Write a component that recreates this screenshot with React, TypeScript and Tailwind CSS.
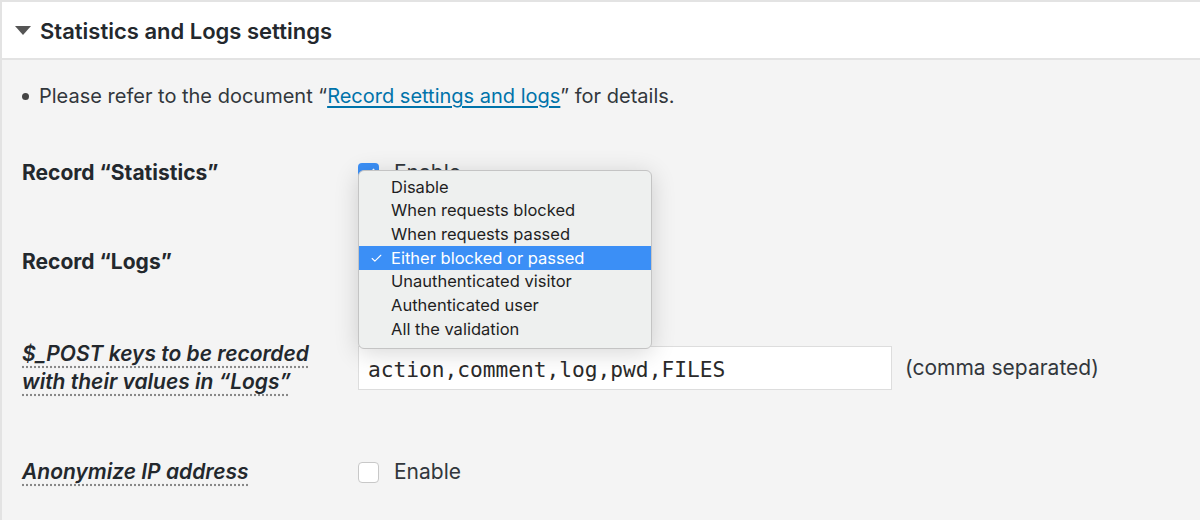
import { Check } from "lucide-react";

const options = [
  "Disable",
  "When requests blocked",
  "When requests passed",
  "Either blocked or passed",
  "Unauthenticated visitor",
  "Authenticated user",
  "All the validation",
];

const App = () => {
  return (
    <div className="w-[1200px] h-[520px] overflow-hidden bg-[#f4f4f4] border-t-2 border-l-2 border-[#e3e3e3] font-['Inter',sans-serif] text-[#23282d]">
      {/* Header */}
      <div className="h-[58px] bg-white border-b-2 border-[#e3e3e3] flex items-center pl-[13px] gap-[9px]">
        <svg width="16" height="9" viewBox="0 0 16 9" className="mt-[1px]">
          <polygon points="0,0 16,0 8,9" fill="#555" />
        </svg>
        <h2 className="text-[22px] font-semibold mt-[2px]">Statistics and Logs settings</h2>
      </div>

      {/* Body */}
      <div className="pl-[20px]">
        <ul className="mt-[22px] h-[28px] flex items-center text-[20px] text-[#32373c]">
          <li className="flex items-center gap-[10px]">
            <span className="w-[7px] h-[7px] rounded-full bg-[#444]" />
            <span>
              Please refer to the document “
              <a href="#" className="text-[#0073aa] underline underline-offset-[3px]">
                Record settings and logs
              </a>
              ” for details.
            </span>
          </li>
        </ul>

        {/* Record Statistics */}
        <div className="mt-[38px] h-[50px] flex items-center">
          <div className="w-[336px] text-[21px] font-bold">Record “Statistics”</div>
          <div className="relative flex items-center gap-[15px]">
            <span className="w-[21px] h-[21px] rounded-[4px] bg-[#3b8ff6] flex items-center justify-center">
              <Check className="w-[14px] h-[14px] text-white" strokeWidth={3} />
            </span>
            <span className="text-[21px] text-[#32373c]">Enable</span>

            {/* Open select menu */}
            <div className="absolute left-0 top-[13px] z-10 w-[294px] pt-[4px] pb-[7px] rounded-[6px] bg-[#eef0ef] border border-[#c4c4c4] shadow-[0_4px_24px_rgba(0,0,0,0.16)] text-[16.5px] text-[#1f1f1f]">
              {options.map((o, i) => (
                <div
                  key={o}
                  className={
                    i === 3
                      ? "h-[23.7px] flex items-center bg-[#3b8ff6] text-white"
                      : "h-[23.7px] flex items-center"
                  }
                >
                  <span className="w-[32px] flex justify-center pl-[3px]">
                    {i === 3 && <Check className="w-[13px] h-[13px]" strokeWidth={2} />}
                  </span>
                  {o}
                </div>
              ))}
            </div>
          </div>
        </div>

        {/* Record Logs */}
        <div className="mt-[39px] h-[50px] flex items-center">
          <div className="w-[336px] text-[21px] font-bold">Record “Logs”</div>
          <div className="w-[294px] h-[30px] rounded-[5px] bg-white border border-[#d0d0d0]" />
        </div>

        {/* POST keys */}
        <div className="mt-[53px] h-[56px] flex items-center">
          <div className="w-[336px] text-[21px] font-semibold italic leading-[28px]">
            <span className="underline decoration-dotted decoration-[#888] underline-offset-[5px]">
              $_POST keys to be recorded
            </span>
            <br />
            <span className="underline decoration-dotted decoration-[#888] underline-offset-[5px]">
              with their values in “Logs”
            </span>
          </div>
          <div className="w-[534px] h-[44px] bg-white border border-[#dddddd] flex items-center pl-[9px] pt-[3px] font-['DejaVu_Sans_Mono',monospace] text-[21.2px] text-[#2a2a2a]">
            action,comment,log,pwd,FILES
          </div>
          <span className="ml-[13px] text-[21px] text-[#32373c]">(comma separated)</span>
        </div>

        {/* Anonymize */}
        <div className="mt-[51px] h-[50px] flex items-center">
          <div className="w-[336px] text-[21px] font-semibold italic">
            <span className="underline decoration-dotted decoration-[#888] underline-offset-[5px]">
              Anonymize IP address
            </span>
          </div>
          <div className="flex items-center gap-[15px]">
            <span className="w-[21px] h-[21px] rounded-[4px] bg-white border border-[#c8c8c8]" />
            <span className="text-[21px] text-[#32373c]">Enable</span>
          </div>
        </div>
      </div>
    </div>
  );
};

export default App;
